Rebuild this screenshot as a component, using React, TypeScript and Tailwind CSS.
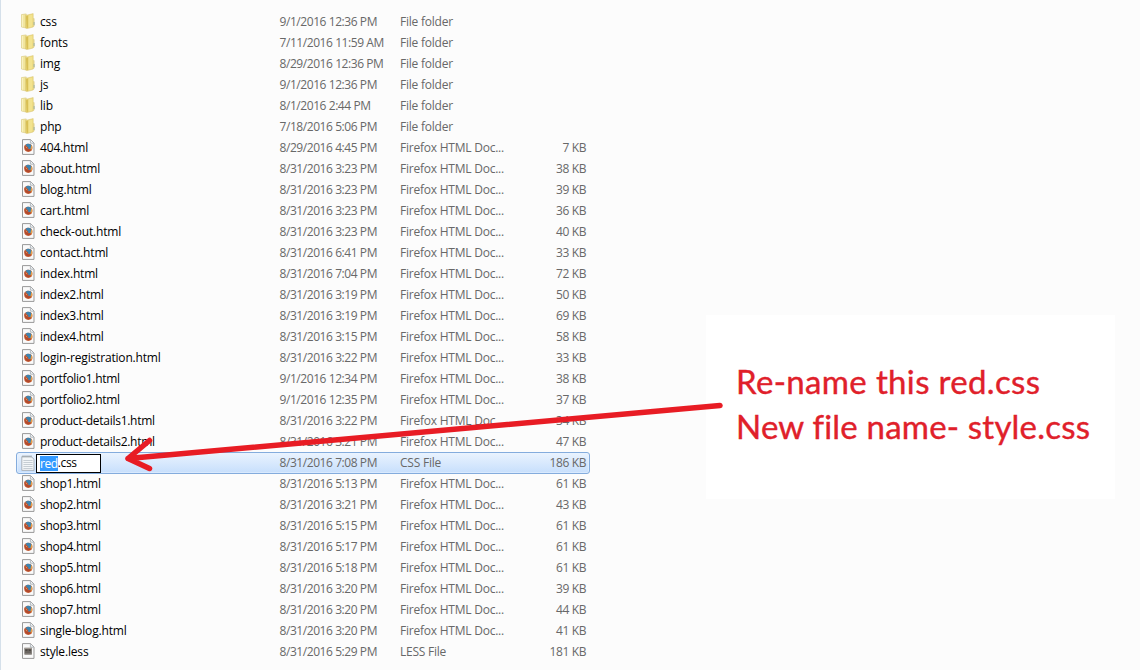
type Kind = "folder" | "html" | "css" | "less";
type Entry = { name: string; date: string; kind: Kind; size?: string };

const entries: Entry[] = [
  { name: "css", date: "9/1/2016 12:36 PM", kind: "folder" },
  { name: "fonts", date: "7/11/2016 11:59 AM", kind: "folder" },
  { name: "img", date: "8/29/2016 12:36 PM", kind: "folder" },
  { name: "js", date: "9/1/2016 12:36 PM", kind: "folder" },
  { name: "lib", date: "8/1/2016 2:44 PM", kind: "folder" },
  { name: "php", date: "7/18/2016 5:06 PM", kind: "folder" },
  { name: "404.html", date: "8/29/2016 4:45 PM", kind: "html", size: "7 KB" },
  { name: "about.html", date: "8/31/2016 3:23 PM", kind: "html", size: "38 KB" },
  { name: "blog.html", date: "8/31/2016 3:23 PM", kind: "html", size: "39 KB" },
  { name: "cart.html", date: "8/31/2016 3:23 PM", kind: "html", size: "36 KB" },
  { name: "check-out.html", date: "8/31/2016 3:23 PM", kind: "html", size: "40 KB" },
  { name: "contact.html", date: "8/31/2016 6:41 PM", kind: "html", size: "33 KB" },
  { name: "index.html", date: "8/31/2016 7:04 PM", kind: "html", size: "72 KB" },
  { name: "index2.html", date: "8/31/2016 3:19 PM", kind: "html", size: "50 KB" },
  { name: "index3.html", date: "8/31/2016 3:19 PM", kind: "html", size: "69 KB" },
  { name: "index4.html", date: "8/31/2016 3:15 PM", kind: "html", size: "58 KB" },
  { name: "login-registration.html", date: "8/31/2016 3:22 PM", kind: "html", size: "33 KB" },
  { name: "portfolio1.html", date: "9/1/2016 12:34 PM", kind: "html", size: "38 KB" },
  { name: "portfolio2.html", date: "9/1/2016 12:35 PM", kind: "html", size: "37 KB" },
  { name: "product-details1.html", date: "8/31/2016 3:22 PM", kind: "html", size: "34 KB" },
  { name: "product-details2.html", date: "8/31/2016 3:21 PM", kind: "html", size: "47 KB" },
  { name: "red.css", date: "8/31/2016 7:08 PM", kind: "css", size: "186 KB" },
  { name: "shop1.html", date: "8/31/2016 5:13 PM", kind: "html", size: "61 KB" },
  { name: "shop2.html", date: "8/31/2016 3:21 PM", kind: "html", size: "43 KB" },
  { name: "shop3.html", date: "8/31/2016 5:15 PM", kind: "html", size: "61 KB" },
  { name: "shop4.html", date: "8/31/2016 5:17 PM", kind: "html", size: "61 KB" },
  { name: "shop5.html", date: "8/31/2016 5:18 PM", kind: "html", size: "61 KB" },
  { name: "shop6.html", date: "8/31/2016 3:20 PM", kind: "html", size: "39 KB" },
  { name: "shop7.html", date: "8/31/2016 3:20 PM", kind: "html", size: "44 KB" },
  { name: "single-blog.html", date: "8/31/2016 3:20 PM", kind: "html", size: "41 KB" },
  { name: "style.less", date: "8/31/2016 5:29 PM", kind: "less", size: "181 KB" },
];

const typeLabels: Record<Kind, string> = {
  folder: "File folder",
  html: "Firefox HTML Doc...",
  css: "CSS File",
  less: "LESS File",
};

function FolderIcon() {
  return (
    <svg width="16" height="16" viewBox="0 0 16 16">
      <path d="M.4 1.6 5.2 .9V15L.4 14Z" fill="#f1e59c" stroke="#d9c981" strokeWidth=".6" />
      <path d="M1.6 2V13.8" stroke="#faf3c4" strokeWidth="1" />
      <path d="M4.6 2.4 12.2 .6V14L6 15.6 4.6 15Z" fill="#ecd97e" stroke="#d6c36c" strokeWidth=".5" />
      <path d="M5 3.2 7.2 2.6V14.4L5.6 15.2Z" fill="#d8bf54" />
      <path d="M7.6 2.4 11.4 1.4V13.6L7.6 14.6Z" fill="#f2e38f" />
      <path d="M12.4 5 13.4 5.6V13L12.4 14Z" fill="#d9c56b" />
      <path d="M13.1 9V12" stroke="#8fa9a0" strokeWidth=".8" />
    </svg>
  );
}

function PageShape() {
  return (
    <>
      <path d="M1.5 .6H9.6L13 4V15.4H1.5Z" fill="#fafafa" stroke="#999" strokeWidth="1" />
      <path d="M9.4 .8V4.2H12.8" fill="#eef2f5" stroke="#a4abb0" strokeWidth=".8" />
    </>
  );
}

function HtmlIcon() {
  return (
    <svg width="16" height="16" viewBox="0 0 16 16">
      <PageShape />
      <circle cx="7.3" cy="8.8" r="4.1" fill="#c8643c" />
      <path d="M4.6 6C6.4 3.8 10.6 4.6 11 8 10.8 9.8 8.8 10.6 7.4 9.8L6 7.6Z" fill="#3f84ae" />
      <path d="M3.5 6.4C3.2 9.4 4.4 11.6 6.6 12.2 9 12.6 10.9 11.2 11.3 9.2 9.8 10.8 7.8 10.6 6.6 9.4L7.4 8.6 5.4 7.6Z" fill="#b2492c" />
      <path d="M10.4 6C11.8 7.6 11.5 10.2 10 11.5L9.6 9.6Z" fill="#e8a04a" />
      <path d="M4 7.4 6 8.2 6.4 9.8Z" fill="#eaa566" />
    </svg>
  );
}

function CssIcon() {
  return (
    <svg width="16" height="16" viewBox="0 0 16 16">
      <path d="M.8 1.6H10.2L13 4.2V15.4H.8Z" fill="#f3f6f8" stroke="#a5adb4" strokeWidth=".9" />
      <path d="M2.4 5.5H11.6M2.4 7.5H11.6M2.4 9.5H11.6M2.4 11.5H11.6M2.4 13.5H11.6" stroke="#c2cacf" strokeWidth=".9" />
      <path d="M2 .3V2.6M4 .3V2.6M6 .3V2.6M8 .3V2.6M10 .3V2.6" stroke="#8f999f" strokeWidth=".8" />
    </svg>
  );
}

function LessIcon() {
  return (
    <svg width="16" height="16" viewBox="0 0 16 16">
      <PageShape />
      <rect x="3.4" y="4.8" width="7.4" height="6.8" fill="#69645f" />
      <path d="M3.4 5.3H10.8" stroke="#aaa49e" strokeWidth="1" />
      <path d="M4.4 7.2H6.4M7.8 7.2H9.8" stroke="#3f3a36" strokeWidth="1" />
      <path d="M4 11H10.4" stroke="#a09a94" strokeWidth=".8" />
    </svg>
  );
}

const icons = { folder: FolderIcon, html: HtmlIcon, css: CssIcon, less: LessIcon };

function Row({ entry }: { entry: Entry }) {
  const Icon = icons[entry.kind];
  const selected = entry.kind === "css";
  const numbered = /[a-z]\d\./.test(entry.name);
  return (
    <div
      className={
        selected
          ? "-mb-px flex h-[22px] w-[574px] items-center rounded-[3px] border border-[#84acdd] bg-linear-to-b from-[#eaf3fe] to-[#c7dffc] pr-[3px] pl-[4px] shadow-[inset_0_0_0_1px_#e9f3ff80]"
          : "flex h-[21px] w-[574px] items-center pr-1 pl-[5px]"
      }
    >
      <span className="-mt-px w-[15px] shrink-0">
        <Icon />
      </span>
      {selected ? (
        <span className="relative flex w-[243.5px] shrink-0">
          <span className="flex h-[19px] w-[65px] items-center border border-black bg-white pl-[3px] tracking-[-0.4px] text-black">
            <span className="bg-[#3399ff] leading-[15px] text-white">red</span>
            <span>.css</span>
          </span>
        </span>
      ) : (
        <span
          className={
            numbered
              ? "w-[243.5px] shrink-0 pl-1 tracking-[-0.28px] text-black"
              : "w-[243.5px] shrink-0 pl-1 tracking-[-0.17px] text-black"
          }
        >
          {entry.name}
        </span>
      )}
      <span className="w-[120.5px] shrink-0 tracking-[-0.43px]">{entry.date}</span>
      <span className="w-[120px] shrink-0 tracking-[-0.23px]">{typeLabels[entry.kind]}</span>
      <span className="flex-1 text-right tracking-[-0.4px]">{entry.size}</span>
    </div>
  );
}

export default function App() {
  return (
    <main className="relative flex h-[670px] w-[1140px] overflow-hidden border-l border-[#d5e0ea] bg-[#fcfcfc] font-['Open_Sans',sans-serif] text-[12px] whitespace-nowrap text-[#686868]">
      <section className="w-[690px] shrink-0 pt-[11px] pl-[15px]">
        {entries.map((entry) => (
          <Row key={entry.name} entry={entry} />
        ))}
      </section>
      <aside className="mt-[315px] ml-[15px] h-[184px] w-[409px] shrink-0 bg-white pt-[44px] pl-[30px] font-['Lato',sans-serif] text-[33px] leading-[45px] text-[#e0202a] [-webkit-text-stroke:0.4px_#e0202a]">
        <p className="tracking-[0.35px]">Re-name this red.css</p>
        <p className="tracking-[0.2px]">New file name- style.css</p>
      </aside>
      <svg className="pointer-events-none absolute top-0 -left-px" width="1140" height="670" viewBox="0 0 1140 670">
        <path
          d="M720 405.5 128 458.5M149.5 440.5 128 458.5 149.5 468.5"
          fill="none"
          stroke="#e81c24"
          strokeWidth="5.5"
          strokeLinecap="round"
          strokeLinejoin="round"
        />
      </svg>
    </main>
  );
}
